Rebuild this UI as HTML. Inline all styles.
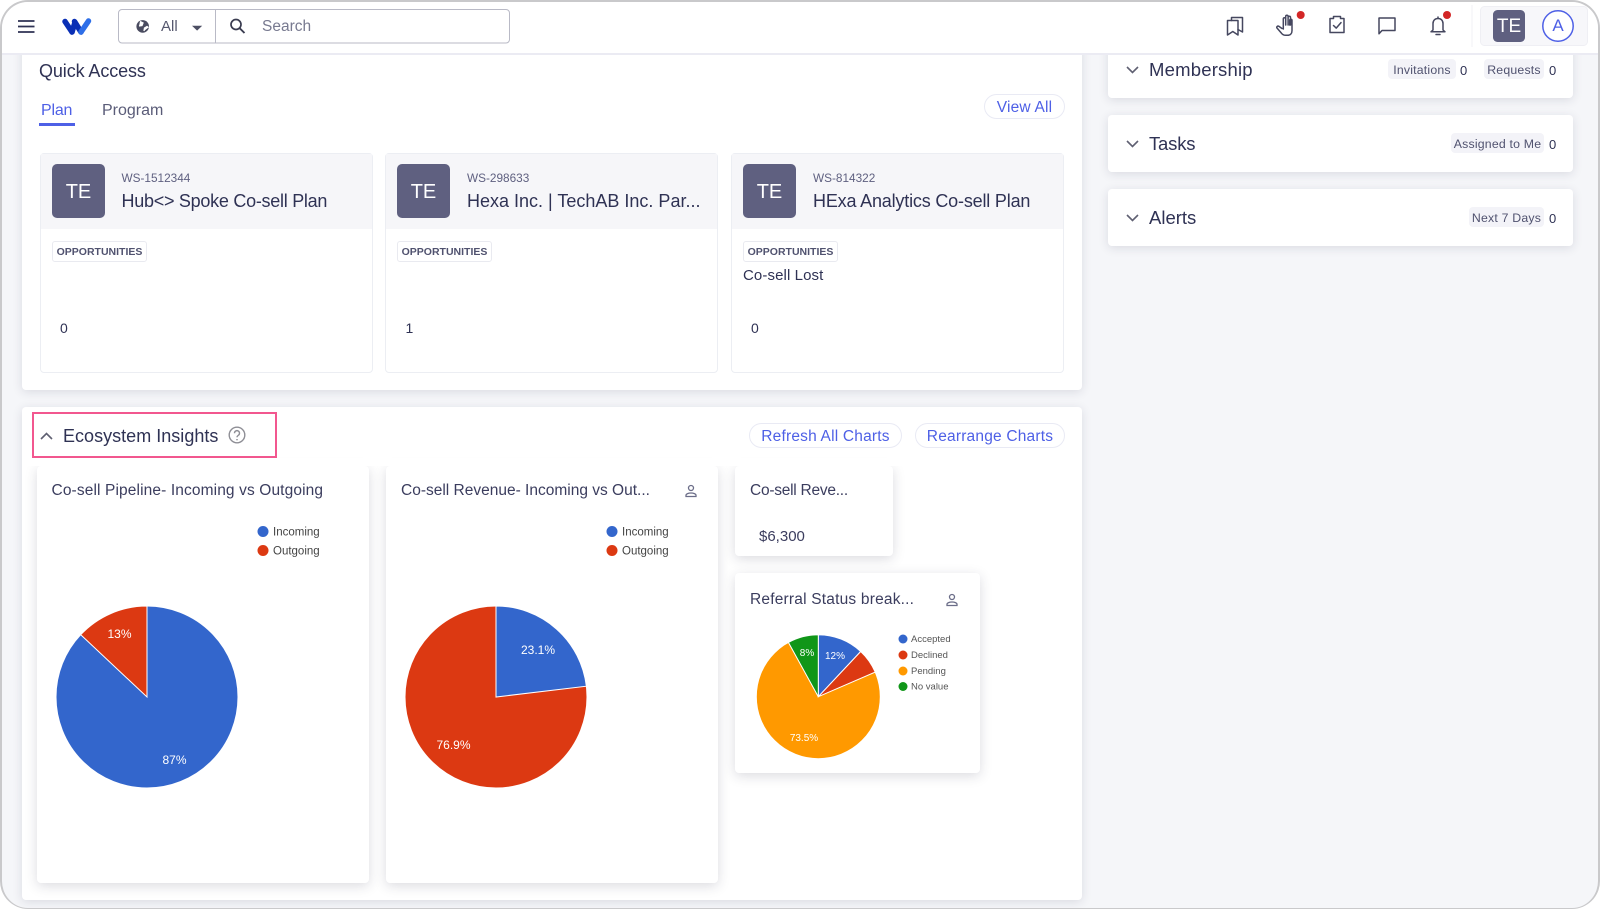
<!DOCTYPE html>
<html lang="en">
<head>
<meta charset="utf-8">
<title>Dashboard</title>
<style>
html,body{margin:0;padding:0;width:1600px;height:909px;overflow:hidden;background:#fff}
body{font-family:"Liberation Sans","Noto Sans CJK JP",sans-serif;color:#2f3254}
.a{position:absolute;white-space:nowrap}
#frame{position:absolute;left:0;top:0;width:1600px;height:909px;box-sizing:border-box;border:2px solid #c9c9cb;border-bottom-width:1.5px;border-radius:28px;background:#f5f6f9;overflow:hidden}
#stage{position:absolute;left:-2px;top:-2px;width:1600px;height:909px}
.card{position:absolute;background:#fff;border-radius:4px;box-shadow:0 2px 10px rgba(40,40,70,.13)}
.qc{position:absolute;top:153px;width:332.500px;height:220px;background:#fff;border:1px solid #eceef3;border-radius:4px;box-sizing:border-box}
.qh{position:absolute;left:0;top:0;right:0;height:75px;background:#f6f6f9}
.av{position:absolute;background:#5f6080;color:#fff;border-radius:5px;text-align:center;font-size:20px}
.t{line-height:1;letter-spacing:.3px}
.pill{position:absolute;background:#f3f3f8;border-radius:4px;height:20px;line-height:22.500px;font-size:12.300px;color:#50526f;text-align:center;letter-spacing:.2px;white-space:nowrap}
.btn{position:absolute;border:1px solid #e9eaf4;border-radius:14px;box-sizing:border-box;color:#4e60e6;text-align:center;font-size:15.500px;background:#fff;white-space:nowrap;letter-spacing:.2px}
.chip{position:absolute;left:11px;top:87px;width:95px;height:21px;box-sizing:border-box;border:1px solid #e9eaf0;border-radius:3px;font-size:10.500px;font-weight:700;letter-spacing:0;line-height:20px;text-align:center;color:#50526f;background:#fff;white-space:nowrap}
.cc{position:absolute;background:#fff;border-radius:4px;box-shadow:0 3px 12px rgba(40,40,70,.17)}
svg{position:absolute;overflow:visible}
svg text{font-family:"Liberation Sans",sans-serif}
</style>
</head>
<body>
<div id="frame"><div id="stage">

<!-- right panels -->
<div class="card" style="left:1108px;top:40px;width:465px;height:58px"></div>
<div class="card" style="left:1108px;top:115px;width:465px;height:57px"></div>
<div class="card" style="left:1108px;top:189px;width:465px;height:57px"></div>

<svg style="left:0;top:0" width="1600" height="909" fill="none" stroke="#5f6072" stroke-width="1.600">
<path d="M1127 67l5.500 5.500 5.500-5.500"/>
<path d="M1127 141l5.500 5.500 5.500-5.500"/>
<path d="M1127 215l5.500 5.500 5.500-5.500"/>
</svg>
<div class="a t" style="left:1149px;top:61px;font-size:18.500px;letter-spacing:.2px">Membership</div>
<div class="a t" style="left:1149px;top:135px;font-size:18.500px;letter-spacing:-.2px">Tasks</div>
<div class="a t" style="left:1149px;top:209px;font-size:18.500px;letter-spacing:0">Alerts</div>
<div class="pill" style="left:1388px;top:59px;width:68px">Invitations</div>
<div class="a t" style="left:1460px;top:64px;font-size:13px">0</div>
<div class="pill" style="left:1484px;top:59px;width:60px">Requests</div>
<div class="a t" style="left:1549px;top:64px;font-size:13px">0</div>
<div class="pill" style="left:1451px;top:133px;width:93px">Assigned to Me</div>
<div class="a t" style="left:1549px;top:138px;font-size:13px">0</div>
<div class="pill" style="left:1469px;top:207px;width:75px">Next 7 Days</div>
<div class="a t" style="left:1549px;top:212px;font-size:13px">0</div>

<!-- Quick access -->
<div class="card" style="left:22px;top:40px;width:1060px;height:350px"></div>
<div class="a t" style="left:39px;top:62px;font-size:18px;letter-spacing:-.1px">Quick Access</div>
<div class="a t" style="left:41px;top:103px;font-size:16px;color:#4e60e6;letter-spacing:-.2px">Plan</div>
<div class="a" style="left:39px;top:123px;width:36px;height:3px;background:#4e60e6"></div>
<div class="a t" style="left:102px;top:103px;font-size:16px;color:#5a5c78;letter-spacing:0">Program</div>
<div class="btn" style="left:984px;top:94px;width:81px;height:25px;line-height:25px">View All</div>

<div class="qc" style="left:40px"><div class="qh"></div>
<div class="av" style="left:11px;top:10px;width:53px;height:54px;line-height:56px">TE</div>
<div class="a t" style="left:80.500px;top:19px;font-size:11.800px;letter-spacing:0;color:#5f6080">WS-1512344</div>
<div class="a t" style="left:80.500px;top:38px;font-size:18px;letter-spacing:-.27px">Hub&lt;&gt; Spoke Co-sell Plan</div>
<div class="chip">OPPORTUNITIES</div>
<div class="a t" style="left:19px;top:167px;font-size:14px">0</div>
</div>
<div class="qc" style="left:385px"><div class="qh"></div>
<div class="av" style="left:11px;top:10px;width:53px;height:54px;line-height:56px">TE</div>
<div class="a t" style="left:81px;top:19px;font-size:11.800px;letter-spacing:0;color:#5f6080">WS-298633</div>
<div class="a t" style="left:81px;top:38px;font-size:18px;letter-spacing:0">Hexa Inc. | TechAB Inc. Par...</div>
<div class="chip">OPPORTUNITIES</div>
<div class="a t" style="left:19.500px;top:167px;font-size:14px">1</div>
</div>
<div class="qc" style="left:731px"><div class="qh"></div>
<div class="av" style="left:11px;top:10px;width:53px;height:54px;line-height:56px">TE</div>
<div class="a t" style="left:81px;top:19px;font-size:11.800px;letter-spacing:0;color:#5f6080">WS-814322</div>
<div class="a t" style="left:81px;top:38px;font-size:18px;letter-spacing:-.18px">HExa Analytics Co-sell Plan</div>
<div class="chip">OPPORTUNITIES</div>
<div class="a t" style="left:11px;top:114px;font-size:15px;letter-spacing:.1px">Co-sell Lost</div>
<div class="a t" style="left:19px;top:167px;font-size:14px">0</div>
</div>

<!-- Ecosystem -->
<div class="card" style="left:22px;top:407px;width:1060px;height:493px"></div>
<div class="a" style="left:32px;top:412px;width:245px;height:46px;box-sizing:border-box;border:2px solid #f2578f"></div>
<svg style="left:0;top:0" width="120" height="460" fill="none" stroke="#5f6072" stroke-width="1.600"><path d="M41 439l5.500-5.500 5.500 5.500"/></svg>
<div class="a t" style="left:63px;top:427px;font-size:18px;letter-spacing:.02px">Ecosystem Insights</div>
<svg style="left:228px;top:426px" width="18" height="18" fill="none" stroke="#8f8f96" stroke-width="1.400"><circle cx="9" cy="9" r="7.800"/><path d="M6.500 7.200a2.500 2.500 0 1 1 3.800 2.100c-.9.600-1.300 1-1.300 2"/><path d="M9 13v1.300" stroke-width="1.500"/></svg>
<div class="btn" style="left:749px;top:423px;width:153px;height:25px;line-height:25px">Refresh All Charts</div>
<div class="btn" style="left:915px;top:423px;width:150px;height:25px;line-height:25px">Rearrange Charts</div>

<div class="cc" style="left:37px;top:466px;width:332px;height:417px"></div>
<div class="cc" style="left:386px;top:466px;width:332px;height:417px"></div>
<div class="cc" style="left:735px;top:466px;width:158px;height:90px"></div>
<div class="cc" style="left:735px;top:573px;width:245px;height:200px"></div>
<div class="a" style="left:22px;top:458px;width:1060px;height:8px;background:#fff"></div>

<div class="a t" style="left:51.500px;top:483px;font-size:15.500px;color:#3b3d5e;letter-spacing:.12px">Co-sell Pipeline- Incoming vs Outgoing</div>
<div class="a t" style="left:401px;top:483px;font-size:15.500px;color:#3b3d5e;letter-spacing:0">Co-sell Revenue- Incoming vs Out...</div>
<div class="a t" style="left:750px;top:483px;font-size:15.500px;color:#3b3d5e;letter-spacing:-.25px">Co-sell Reve...</div>
<div class="a t" style="left:759px;top:529px;font-size:15px;color:#3b3d5e;letter-spacing:0">$6,300</div>
<div class="a t" style="left:750px;top:592px;font-size:15.500px;color:#3b3d5e;letter-spacing:.2px">Referral Status break...</div>

<svg style="left:0;top:0" width="1600" height="909">
<g fill="none" stroke="#6b6d88" stroke-width="1.300">
<circle cx="691" cy="488" r="2.500"/><path d="M686 496.500v-1.200c0-1.500 2.500-2.300 5-2.300s5 .8 5 2.300v1.200z"/>
<circle cx="952" cy="597" r="2.500"/><path d="M947 605.500v-1.200c0-1.500 2.500-2.300 5-2.300s5 .8 5 2.300v1.200z"/>
</g>
<g stroke="#fff" stroke-width="1">
<circle cx="147" cy="697" r="91" fill="#3366cc"/>
<path d="M147 697L147 606A91 91 0 0 0 80.700 634.700Z" fill="#dc3912"/>
<circle cx="496" cy="697" r="91" fill="#dc3912"/>
<path d="M496 697L496 606A91 91 0 0 1 586.350 686.200Z" fill="#3366cc"/>
<circle cx="818.300" cy="696.700" r="62" fill="#ff9900"/>
<path d="M818.300 696.700L818.300 634.700A62 62 0 0 1 860.700 651.500Z" fill="#3366cc"/>
<path d="M818.300 696.700L860.700 651.500A62 62 0 0 1 875.200 672.100Z" fill="#dc3912"/>
<path d="M818.300 696.700L788.400 642.400A62 62 0 0 1 818.300 634.700Z" fill="#109618"/>
</g>
<g fill="#fff" font-size="12" text-anchor="middle">
<text x="119.500" y="638">13%</text>
<text x="174.500" y="764">87%</text>
<text x="538" y="654">23.1%</text>
<text x="453.500" y="749">76.9%</text>
</g>
<g fill="#fff" font-size="10" text-anchor="middle">
<text x="835" y="659">12%</text>
<text x="807" y="656">8%</text>
<text x="804" y="741">73.5%</text>
</g>
<circle cx="263" cy="531.500" r="5.500" fill="#3366cc"/><circle cx="263" cy="550.500" r="5.500" fill="#dc3912"/>
<circle cx="612" cy="531.500" r="5.500" fill="#3366cc"/><circle cx="612" cy="550.500" r="5.500" fill="#dc3912"/>
<g fill="#444" font-size="11.500">
<text x="273" y="535.500">Incoming</text><text x="273" y="554.500">Outgoing</text>
<text x="622" y="535.500">Incoming</text><text x="622" y="554.500">Outgoing</text>
</g>
<circle cx="903" cy="639" r="4.500" fill="#3366cc"/><circle cx="903" cy="655" r="4.500" fill="#dc3912"/>
<circle cx="903" cy="671" r="4.500" fill="#ff9900"/><circle cx="903" cy="686.500" r="4.500" fill="#109618"/>
<g fill="#555" font-size="9.500">
<text x="911" y="642">Accepted</text><text x="911" y="658">Declined</text>
<text x="911" y="674">Pending</text><text x="911" y="689.500">No value</text>
</g>
</svg>

<!-- Header -->
<div class="a" style="left:0;top:0;width:1600px;height:53px;background:#fff;border-bottom:2px solid #ebebf3"></div>
<svg style="left:0;top:0" width="1600" height="56">
<g stroke="#2f3254" stroke-width="1.800"><path d="M18 21h16.500M18 26.500h16.500M18 32h16.500"/></g>
<g fill="none" stroke-linecap="round" stroke-linejoin="round" stroke-width="5.500">
<path d="M65 21.500L72 32" stroke="#0a2fb5"/>
<path d="M74.500 21.500L81 32" stroke="#0a2fb5"/>
<path d="M72 32L74.500 24" stroke="#0a2fb5"/>
<path d="M81 32L88.500 21" stroke="#2e6fe8"/>
</g>
<rect x="118.500" y="9.500" width="391" height="33.500" rx="3.500" fill="#fff" stroke="#b9bac6"/>
<path d="M215.500 10v33" stroke="#b9bac6"/>
<circle cx="142.700" cy="26.400" r="6.300" fill="#4a4c60"/>
<path d="M140 21.500l3 1.500-1 2.500-3 .5M144 31l.5-3 2.500-1.500 1.500 1" stroke="#fff" stroke-width="1.300" fill="#fff"/>
<path d="M192 25.800h10.200l-5.100 4.800z" fill="#4d4f63"/>
<circle cx="236" cy="24.500" r="5" fill="none" stroke="#3a3c50" stroke-width="1.700"/>
<path d="M239.500 28l5 5" stroke="#3a3c50" stroke-width="1.900"/>
<g fill="none" stroke="#45475f" stroke-width="1.500" stroke-linejoin="round" stroke-linecap="round">
<path d="M1227.500 20.500h10.500v14.500l-5.200-3.500-5.300 3.500z"/><path d="M1231.500 20.500v-3h11v14.500l-4.500-2.500"/>
<path d="M1282 28.500l-3.200-2.200c-1.400-.8-2.700.8-1.600 2l4.300 5c1.200 1.500 2.500 2 4.300 2h1.700c2.900 0 4.500-2 4.500-4.700V20.500c0-1.600-2.300-1.600-2.300 0V25M1290.500 25V17.500c0-1.600-2.400-1.600-2.400 0V25M1288.100 25V16.500c0-1.600-2.400-1.600-2.400 0V25M1285.700 25v-6c0-1.600-2.400-1.600-2.400 0v10"/>
<path d="M1330 18.500h3.500v-2h7v2h3.500v14h-14z"/>
<path d="M1333.500 25.500l2.700 2.600 4.800-5.500"/>
<path d="M1379 18h16v12.500h-13l-3 3.300z"/>
<path d="M1438 17v1.500M1433 30v-6.500c0-3 2-5 5-5s5 2 5 5V30l2 1.800h-14zM1436 34.500h4"/>
</g>
<circle cx="1300.700" cy="15" r="4" fill="#d32626"/>
<circle cx="1447" cy="15" r="4" fill="#d32626"/>
<path d="M1472 5v42" stroke="#f0f0f4"/>
<rect x="1480.500" y="6.500" width="107" height="39" rx="4" fill="#f7f7fa" stroke="#efeff4"/>
<rect x="1493" y="10" width="32" height="32" rx="4.500" fill="#5f6080"/>
<circle cx="1558" cy="26" r="15.200" fill="#fff" stroke="#4e60e6" stroke-width="1.500"/>
</svg>
<div class="a" style="left:161px;top:18px;font-size:15px;line-height:17px;color:#55576e">All</div>
<div class="a" style="left:262px;top:18px;font-size:15.500px;line-height:17px;color:#787a90;letter-spacing:0">Search</div>
<div class="a" style="left:1493px;top:11px;width:32px;height:32px;line-height:32px;text-align:center;color:#fff;font-size:19px">TE</div>
<div class="a" style="left:1543px;top:11px;width:30px;height:30px;line-height:30px;text-align:center;color:#4e60e6;font-size:17px">A</div>

</div></div>
</body>
</html>
